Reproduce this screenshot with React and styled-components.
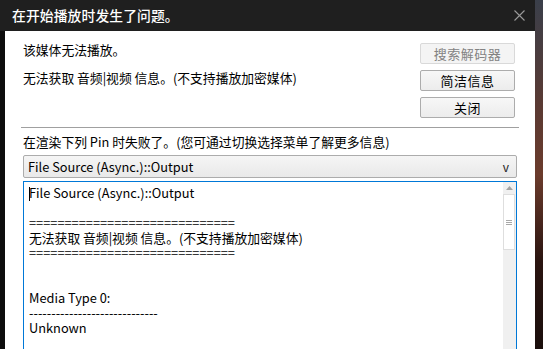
import React from "react";
import styled, { createGlobalStyle } from "styled-components";

const GlobalStyle = createGlobalStyle`
  html, body {
    margin: 0;
    padding: 0;
    background: #0c0c0c;
    overflow: hidden;
  }
  body {
    font-family: "Noto Sans CJK SC", "Noto Sans", sans-serif;
  }
`;

const Screen = styled.div`
  display: flex;
  width: 543px;
  height: 349px;
  overflow: hidden;
`;

const Window = styled.div`
  width: 535px;
  display: flex;
  flex-direction: column;
`;

const Backdrop = styled.div`
  flex: 1;
  background: linear-gradient(180deg, #3a3f4a 0%, #5a3a33 30%, #6b3b2c 50%, #2a1410 75%, #1a0e0c 100%);
`;

const TitleBar = styled.div`
  height: 31px;
  background: #1f1f1f;
  display: flex;
  align-items: center;
  justify-content: space-between;
  padding: 0 10px 2px 12px;
  box-sizing: border-box;
`;

const Title = styled.div`
  color: #ffffff;
  font-size: 13.8px;
  font-weight: 500;
  letter-spacing: 0.1px;
`;

const CloseButton = styled.div`
  width: 12px;
  height: 12px;
  display: flex;
  align-items: center;
  justify-content: center;
  margin-top: 2px;
`;

const Body = styled.div`
  flex: 1;
  display: flex;
`;

const LeftEdge = styled.div`
  width: 5px;
  background: #0d0d0d;
`;

const Content = styled.div`
  flex: 1;
  background: #ffffff;
  padding: 10px 18px 0 18px;
  display: flex;
  flex-direction: column;
  color: #000;
  font-size: 12.8px;
`;

const TopRow = styled.div`
  display: flex;
  justify-content: space-between;
  padding-right: 2px;
`;

const Messages = styled.div`
  display: flex;
  flex-direction: column;
  gap: 11px;
`;

const Message = styled.div`
  line-height: 17px;
`;

const Buttons = styled.div`
  display: flex;
  flex-direction: column;
  gap: 6px;
  margin-top: 2px;
`;

const Button = styled.div`
  width: 95px;
  height: 21px;
  box-sizing: border-box;
  border: 1px solid ${(p) => (p.disabled ? "#d9d9d9" : "#acacac")};
  border-radius: 2px;
  background: ${(p) =>
    p.disabled ? "#f4f4f4" : "linear-gradient(180deg, #f7f7f7 0%, #ececec 100%)"};
  color: ${(p) => (p.disabled ? "#838383" : "#000")};
  display: flex;
  align-items: center;
  justify-content: center;
  font-size: 13px;
  letter-spacing: 0.5px;
`;

const Separator = styled.div`
  height: 1px;
  background: #a0a0a0;
  margin: 9px -2px 0 -2px;
`;

const Hint = styled.div`
  margin-top: 5px;
  line-height: 17px;
`;

const Select = styled.div`
  margin-top: 5px;
  height: 23px;
  box-sizing: border-box;
  border: 1px solid #acacac;
  border-radius: 2px;
  background: linear-gradient(180deg, #f5f5f5 0%, #e9e9e9 100%);
  display: flex;
  align-items: center;
  justify-content: space-between;
  padding: 0 7px 0 4px;
`;

const Arrow = styled.span`
  font-size: 12px;
  color: #222;
`;

const TextBox = styled.div`
  margin-top: 3px;
  flex: 1;
  border: 1px solid #0078d7;
  border-bottom: none;
  display: flex;
`;

const TextLines = styled.div`
  flex: 1;
  padding: 3px 5px 0 5px;
  line-height: 15px;
  white-space: pre;
`;

const Line = styled.div`
  height: 15px;
`;

const Caret = styled.span`
  display: inline-block;
  width: 1px;
  height: 14px;
  background: #000;
  vertical-align: -3px;
  margin-right: -1px;
`;

const ScrollBar = styled.div`
  width: 12px;
  background: #f0f0f0;
  display: flex;
  flex-direction: column;
  padding-right: 1px;
`;

const ScrollArrow = styled.div`
  height: 12px;
  display: flex;
  align-items: center;
  justify-content: center;
`;

const Thumb = styled.div`
  height: 56px;
  background: #ffffff;
  border: 1px solid #dedede;
  box-sizing: border-box;
  display: flex;
  align-items: center;
  justify-content: center;
`;

const lines = [
  "",
  "=============================",
  "无法获取 音频|视频 信息。(不支持播放加密媒体)",
  "=============================",
  "",
  "",
  "Media Type 0:",
  "-----------------------------",
  "Unknown",
];

export default function App() {
  return (
    <>
      <GlobalStyle />
      <Screen>
        <Window>
          <TitleBar>
            <Title>在开始播放时发生了问题。</Title>
            <CloseButton>
              <svg width="11" height="11" viewBox="0 0 11 11">
                <path d="M0.5 0.5 L10.5 10.5 M10.5 0.5 L0.5 10.5" stroke="#9a9a9a" strokeWidth="1.1" />
              </svg>
            </CloseButton>
          </TitleBar>
          <Body>
            <LeftEdge />
            <Content>
              <TopRow>
                <Messages>
                  <Message>该媒体无法播放。</Message>
                  <Message>无法获取 音频|视频 信息。(不支持播放加密媒体)</Message>
                </Messages>
                <Buttons>
                  <Button disabled>搜索解码器</Button>
                  <Button>简洁信息</Button>
                  <Button>关闭</Button>
                </Buttons>
              </TopRow>
              <Separator />
              <Hint>在渲染下列 Pin 时失败了。(您可通过切换选择菜单了解更多信息)</Hint>
              <Select>
                <span>File Source (Async.)::Output</span>
                <Arrow>v</Arrow>
              </Select>
              <TextBox>
                <TextLines>
                  <Line>
                    <Caret />
                    File Source (Async.)::Output
                  </Line>
                  {lines.map((t, i) => (
                    <Line key={i}>{t}</Line>
                  ))}
                </TextLines>
                <ScrollBar>
                  <ScrollArrow>
                    <svg width="7" height="4" viewBox="0 0 7 4">
                      <path d="M3.5 0 L7 4 L0 4 Z" fill="#a3a3a3" />
                    </svg>
                  </ScrollArrow>
                  <Thumb>
                    <svg width="6" height="5" viewBox="0 0 6 5">
                      <path d="M0 0.5 H6 M0 2.5 H6 M0 4.5 H6" stroke="#a8a8a8" strokeWidth="1" />
                    </svg>
                  </Thumb>
                </ScrollBar>
              </TextBox>
            </Content>
          </Body>
        </Window>
        <Backdrop />
      </Screen>
    </>
  );
}
